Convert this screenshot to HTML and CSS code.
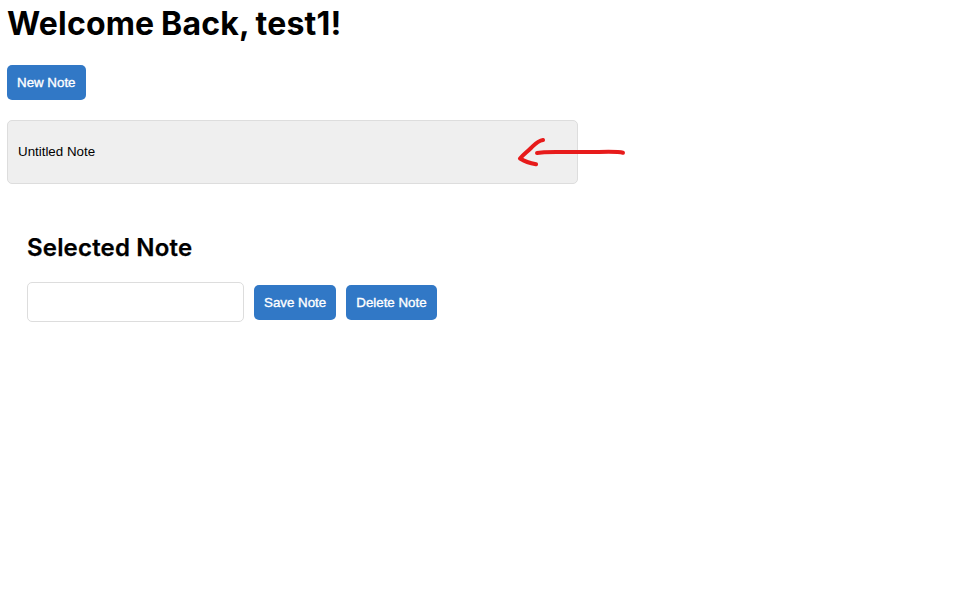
FILE: index.html
```html
<!DOCTYPE html>
<html lang="en">
<head>
<meta charset="utf-8">
<title>Notes</title>
<link rel="stylesheet" href="styles.css">
</head>
<body>
<main class="page">
  <h1 class="title">Welcome Back, test1!</h1>
  <button class="btn new-note">New Note</button>
  <div class="note-list">
    <button class="note">Untitled Note</button>
    <svg class="arrow" width="112" height="34" viewBox="0 0 112 34" fill="none" stroke="#e71b1b" stroke-width="4" stroke-linecap="round" stroke-linejoin="round">
      <path d="M106 14.8C102 13.7 94 13.7 82 14L39 14L27 14.2L20 15"/>
      <path d="M26 2C21 2.5 18 6 14 10C10 14 6 17 3 20.5C7 23 12 25 19 26.3"/>
    </svg>
  </div>
  <section class="selected">
    <h2 class="subtitle">Selected Note</h2>
    <div class="editor">
      <input class="field" type="text" aria-label="Note">
      <button class="btn">Save Note</button>
      <button class="btn">Delete Note</button>
    </div>
  </section>
</main>
</body>
</html>
```
FILE: styles.css
```css
* { box-sizing: border-box; }
body { margin: 0; background: #fff; color: #000; font-family: Inter, sans-serif; }
.page { padding: 4px 7px; }
.title { margin: 0 0 22px; font-size: 32px; line-height: 39px; font-weight: 700; letter-spacing: 0.18px; word-spacing: -1px; }
.btn {
  height: 35px;
  padding: 0 10px;
  border: 0;
  border-radius: 5px;
  background: #3178c6;
  color: #fff;
  font: 500 13.333px/15px "Liberation Sans", Arial, sans-serif;
  -webkit-text-stroke: 0.35px #fff;
  white-space: nowrap;
}
.new-note { display: block; }
.note-list { position: relative; width: 571px; margin-top: 20px; }
.note {
  display: block;
  width: 100%;
  height: 64px;
  padding: 0 10px 2px;
  border: 1px solid #ddd;
  border-radius: 5px;
  background: #efefef;
  color: #000;
  font: 13.333px/15px "Liberation Sans", Arial, sans-serif;
  text-align: left;
}
.arrow { position: absolute; left: 510px; top: 18px; }
.selected { padding: 49px 20px 0; }
.subtitle { margin: 0 0 20px; font-size: 24px; line-height: 29px; font-weight: 600; letter-spacing: 0.18px; -webkit-text-stroke: 0.25px #000; }
.editor { display: flex; align-items: center; gap: 10px; }
.field { width: 217px; height: 40px; border: 1px solid #ddd; border-radius: 5px; padding: 10px; }
```
